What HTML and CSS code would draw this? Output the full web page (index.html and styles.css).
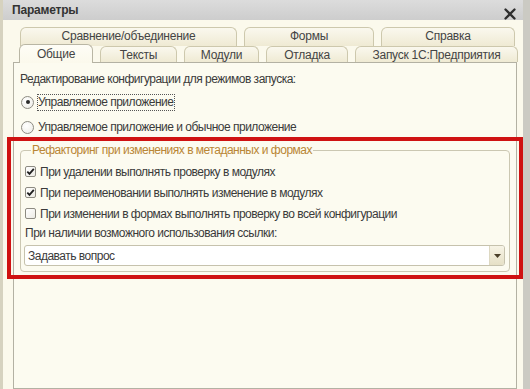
FILE: index.html
```html
<!DOCTYPE html>
<html lang="ru">
<head>
    <meta charset="UTF-8">
    <title>Параметры</title>
    <link rel="stylesheet" href="styles.css">
</head>
<body>
    <div class="window">
        <div class="titlebar">
            <span class="title">Параметры</span>
            <svg class="close" width="12" height="12" viewBox="0 0 12 12">
                <path d="M1.5 1.5 L10.5 10.5 M10.5 1.5 L1.5 10.5" stroke="#2e2e2e" stroke-width="2.3" stroke-linecap="round"/>
            </svg>
        </div>

        <div class="content">
            <div class="tabs tabs-back">
                <div class="tab" style="width: 217px">Сравнение/объединение</div>
                <div class="tab" style="width: 130px">Формы</div>
                <div class="tab" style="width: 134px">Справка</div>
            </div>
            <div class="tabs tabs-front">
                <div class="tab active" style="width: 74px">Общие</div>
                <div class="tab" style="width: 77px">Тексты</div>
                <div class="tab" style="width: 75px">Модули</div>
                <div class="tab" style="width: 82px">Отладка</div>
                <div class="tab" style="width: 163px">Запуск 1С:Предприятия</div>
            </div>

            <div class="panel">
                <div class="hint">Редактирование конфигурации для режимов запуска:</div>

                <div class="radio-row">
                    <span class="radio checked"></span>
                    <span class="focus">Управляемое приложение</span>
                </div>
                <div class="radio-row">
                    <span class="radio"></span>
                    <span>Управляемое приложение и обычное приложение</span>
                </div>

                <div class="highlight">
                    <fieldset class="group">
                        <legend>Рефакторинг при изменениях в метаданных и формах</legend>

                        <div class="check-row">
                            <span class="checkbox checked">
                                <svg width="9" height="9" viewBox="0 0 9 9"><path d="M1.3 4.6 L3.5 6.9 L7.8 1.9" fill="none" stroke="#1f1f1f" stroke-width="1.8"/></svg>
                            </span>
                            <span>При удалении выполнять проверку в модулях</span>
                        </div>
                        <div class="check-row">
                            <span class="checkbox checked">
                                <svg width="9" height="9" viewBox="0 0 9 9"><path d="M1.3 4.6 L3.5 6.9 L7.8 1.9" fill="none" stroke="#1f1f1f" stroke-width="1.8"/></svg>
                            </span>
                            <span>При переименовании выполнять изменение в модулях</span>
                        </div>
                        <div class="check-row">
                            <span class="checkbox"></span>
                            <span>При изменении в формах выполнять проверку во всей конфигурации</span>
                        </div>

                        <div class="field-label">При наличии возможного использования ссылки:</div>

                        <div class="combo">
                            <span class="combo-text">Задавать вопрос</span>
                            <span class="combo-btn">
                                <svg width="7" height="4" viewBox="0 0 7 4"><path d="M0 0 L7 0 L3.5 4 Z" fill="#4a3f28"/></svg>
                            </span>
                        </div>
                    </fieldset>
                </div>
            </div>
        </div>
    </div>
</body>
</html>
```

FILE: styles.css
```css
body {
    margin: 0;
    font-family: "Liberation Sans", Arial, sans-serif;
    font-size: 11px;
    color: #3a3a3a;
    background: #fbf9ec;
}

.window {
    width: 530px;
    height: 389px;
    box-sizing: border-box;
    display: flex;
    flex-direction: column;
    overflow: hidden;
    border-left: 3px solid #d6d2bf;
    border-right: 7px solid #cbcac3;
    background: #fbf9ec;
}

.titlebar {
    height: 20px;
    flex-shrink: 0;
    display: flex;
    align-items: center;
    justify-content: space-between;
    padding: 0 7px 0 9px;
    background: linear-gradient(#dcdcdc, #cdcdcd);
}

.title {
    font-size: 12px;
    font-weight: bold;
    color: #333;
    letter-spacing: -0.2px;
}

.close {
    margin-top: 8px;
}

.content {
    flex: 1;
    display: flex;
    flex-direction: column;
    padding-top: 7px;
}

.tabs {
    display: flex;
    gap: 7px;
}

.tabs-back {
    height: 17px;
    padding-left: 17px;
}

.tabs-front {
    height: 18px;
    padding-left: 16px;
    align-items: flex-end;
}

.tab {
    box-sizing: border-box;
    height: 19px;
    display: flex;
    align-items: center;
    justify-content: center;
    border: 1px solid #cdc8ad;
    border-bottom: none;
    border-radius: 6px 6px 0 0;
    background: linear-gradient(#faf8ee, #efead3);
    color: #444;
    font-size: 12px;
    letter-spacing: -0.25px;
}

.tabs-back .tab {
    padding-bottom: 2px;
}

.tabs-front .tab {
    height: 16px;
}

.tabs-front .tab.active {
    height: 19px;
    background: linear-gradient(#fefdf6, #fbf9ec);
    border-color: #b9b6a4;
    position: relative;
    top: 1px;
}

.panel {
    flex: 1;
    margin: 0 6px 0 10px;
    border: 1px solid #b3b1a3;
    background: #fcfbf0;
    padding-top: 8px;
    font-size: 12px;
    letter-spacing: -0.5px;
}

.hint {
    height: 16px;
    line-height: 16px;
    padding-left: 6px;
}

.radio-row {
    height: 20px;
    margin-top: 5px;
    display: flex;
    align-items: center;
    padding-left: 7px;
    gap: 4px;
}

.radio {
    width: 11px;
    height: 11px;
    border: 1px solid #8d8b82;
    border-radius: 50%;
    background: radial-gradient(circle at 40% 35%, #ffffff, #ecebe4);
    display: flex;
    align-items: center;
    justify-content: center;
}

.radio.checked::after {
    content: "";
    width: 4px;
    height: 4px;
    border-radius: 50%;
    background: #2a2a2a;
}

.focus {
    outline: 1px dotted #555;
    outline-offset: 0;
    padding: 0 1px 1px 0;
}

.highlight {
    margin: 0 -7px 0 -7px;
    border: 4px solid #cf1212;
    padding: 3px 9px 3px 9px;
}

.group {
    margin: 0;
    padding: 0 4px 5px 4px;
    border: 1px solid #cbc7b2;
    border-radius: 4px;
}

.group legend {
    margin-left: 6px;
    padding: 0 1px;
    color: #b98635;
    line-height: 12px;
}

.check-row {
    height: 21px;
    display: flex;
    align-items: center;
    gap: 4px;
}

.check-row:first-of-type {
    margin-top: 5px;
}

.checkbox {
    box-sizing: border-box;
    width: 11px;
    height: 11px;
    border: 1px solid #8d8b82;
    border-radius: 2px;
    background: linear-gradient(135deg, #ffffff, #ecebe4);
    display: flex;
    align-items: center;
    justify-content: center;
}

.field-label {
    height: 17px;
    line-height: 17px;
    margin-top: 1px;
}

.combo {
    box-sizing: border-box;
    height: 21px;
    margin: 3px 0 0 -1px;
    display: flex;
    align-items: center;
    justify-content: space-between;
    border: 1px solid #c6c2ad;
    border-radius: 3px;
    background: #ffffff;
    padding-left: 3px;
}

.combo-btn {
    box-sizing: border-box;
    width: 15px;
    height: 19px;
    display: flex;
    align-items: center;
    justify-content: center;
    border-left: 1px solid #ddd8c2;
    border-radius: 0 2px 2px 0;
    background: linear-gradient(#f7f4e6, #e6e0c6);
}
```
